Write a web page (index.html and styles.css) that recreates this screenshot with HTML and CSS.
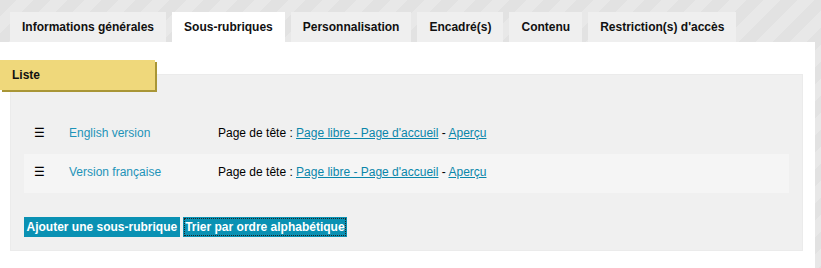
FILE: index.html
```html
<!DOCTYPE html>
<html lang="fr">
<head>
<meta charset="utf-8">
<title>Sous-rubriques</title>
<link rel="stylesheet" href="styles.css">
</head>
<body>
<div class="tabs">
  <div class="tab">Informations générales</div>
  <div class="tab active">Sous-rubriques</div>
  <div class="tab">Personnalisation</div>
  <div class="tab">Encadré(s)</div>
  <div class="tab">Contenu</div>
  <div class="tab">Restriction(s) d'accès</div>
</div>
<div class="panel">
  <div class="legend">Liste</div>
  <div class="box">
    <div class="rows">
      <div class="row">
        <span class="handle">☰</span>
        <a class="name" href="#">English version</a>
        <span class="info">Page de tête : <a href="#">Page libre - Page d'accueil</a> - <a href="#">Aperçu</a></span>
      </div>
      <div class="row alt">
        <span class="handle">☰</span>
        <a class="name" href="#">Version française</a>
        <span class="info">Page de tête : <a href="#">Page libre - Page d'accueil</a> - <a href="#">Aperçu</a></span>
      </div>
    </div>
    <div class="actions">
      <button class="btn">Ajouter une sous-rubrique</button>
      <button class="btn focus">Trier par ordre alphabétique</button>
    </div>
  </div>
</div>
</body>
</html>
```
FILE: styles.css
```css
html, body {
  margin: 0;
  padding: 0;
  height: 100%;
}
body {
  font-family: "Liberation Sans", Arial, sans-serif;
  font-size: 12px;
  color: #111;
  background: repeating-linear-gradient(135deg, #e2e2e2 0 12px, #e8e8e8 12px 24px);
  display: flex;
  flex-direction: column;
}
.tabs {
  display: flex;
  gap: 6px;
  padding: 12px 0 0 10px;
  height: 30px;
}
.tab {
  padding: 0 12px;
  line-height: 30px;
  font-size: 12px;
  font-weight: bold;
  background: #efefef;
  color: #111;
}
.tab.active {
  background: #fff;
}
.panel {
  flex: 1;
  background: #fff;
  margin-right: 6px;
  padding-top: 18px;
}
.legend {
  position: relative;
  z-index: 1;
  width: 143px;
  height: 30px;
  line-height: 30px;
  padding-left: 12px;
  background: #efd87b;
  box-shadow: 2px 2px 0 #a99636;
  font-weight: bold;
  font-size: 12px;
  margin-bottom: -16px;
}
.box {
  margin: 0 12px 0 10px;
  background: #f0f0f0;
  border: 1px solid #ebebeb;
  padding: 40px 13px 13px;
}
.row {
  display: flex;
  align-items: center;
  box-sizing: border-box;
  height: 39px;
  padding-bottom: 4px;
}
.row.alt {
  background: #f5f5f5;
}
.handle {
  width: 35px;
  padding-left: 10px;
  font-size: 12px;
  color: #000;
}
.name {
  width: 149px;
  color: #1d93b8;
  text-decoration: none;
}
.info {
  color: #000;
}
.info a {
  color: #0a86aa;
  text-decoration: underline;
}
.actions {
  display: flex;
  gap: 3px;
  margin-top: 24px;
}
.btn {
  font-family: "Liberation Sans", Arial, sans-serif;
  font-size: 12px;
  font-weight: bold;
  color: #fff;
  background: #0a91b3;
  border: 0;
  height: 20px;
  padding: 0 2.5px;
  margin: 0;
}
.btn.focus {
  outline: 1px dotted #222;
  outline-offset: -2px;
}
```
